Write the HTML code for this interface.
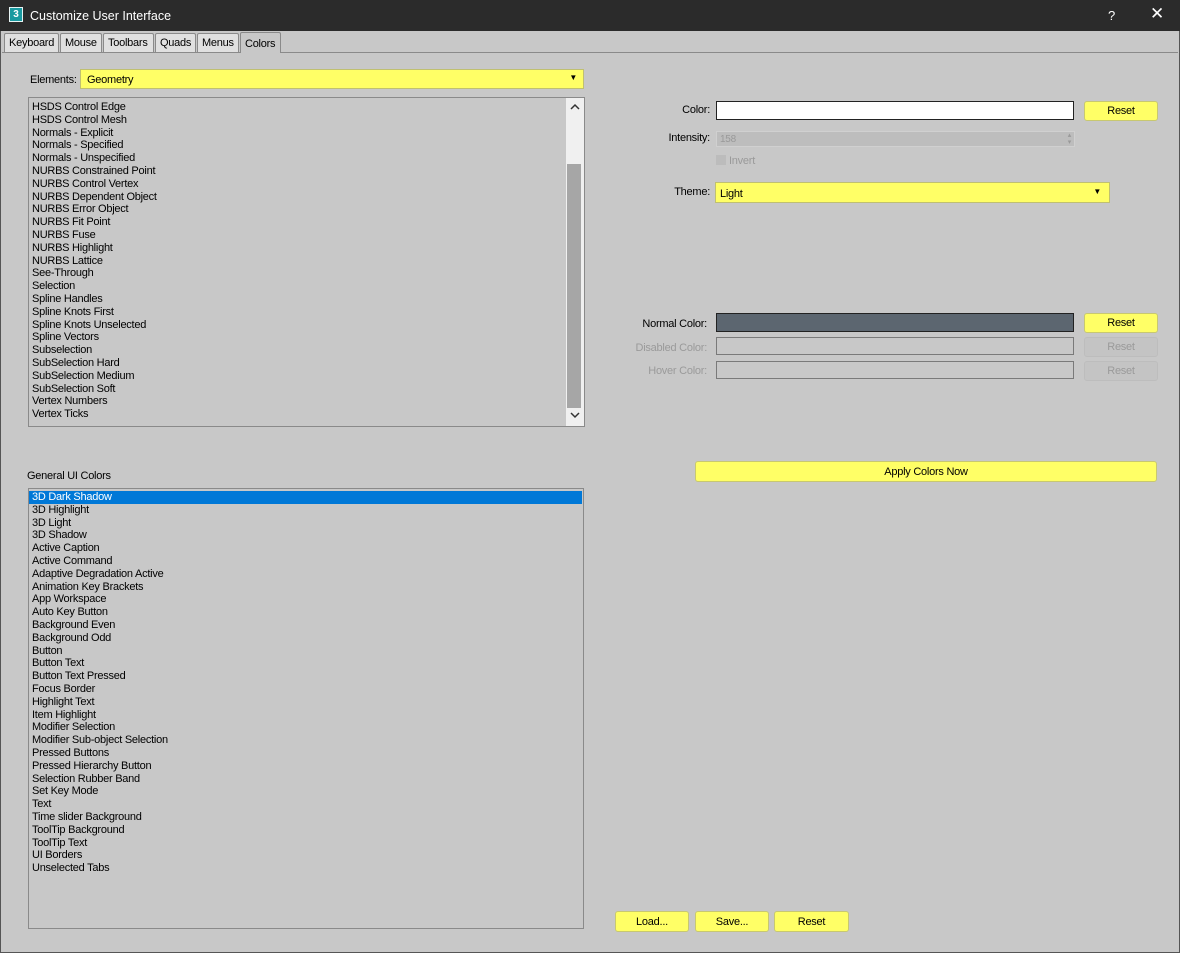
<!DOCTYPE html>
<html><head><style>
*{box-sizing:border-box;margin:0;padding:0}
body{width:1180px;height:953px;background:#c8c8c8;font-family:"Liberation Sans",sans-serif;font-size:11px;letter-spacing:-0.25px;color:#000;position:relative;overflow:hidden}
.a{position:absolute}
.title{left:0;top:0;width:1180px;height:31px;background:#2b2b2b;color:#fff;font-size:12.5px;letter-spacing:0}
.tab{top:33px;height:19px;border:1px solid #8a8a8a;border-bottom:none;background:#e0e0e0;padding:3px 4px 0;font-size:11px;border-radius:2px 2px 0 0}
.list div{height:12.8px;line-height:12.8px;padding-left:3px;white-space:nowrap}
.yb{background:#ffff66;border:1px solid #c8c870;border-radius:3px;text-align:center;line-height:20px}
.gb{background:#c4c4c4;border:1px solid #bdbdbd;border-radius:3px;text-align:center;line-height:20px;color:#9a9a9a}
.lbl{text-align:right;width:110px}
</style></head><body>
<div class="a title">
 <div class="a" style="left:9px;top:7px;width:14px;height:15px;background:#1a9aa0;border:1px solid #e8f4f4;color:#fff;font-size:10px;font-weight:bold;text-align:center;line-height:13px">3</div>
 <div class="a" style="left:30px;top:9px">Customize User Interface</div>
 <div class="a" style="left:1108px;top:8px;font-size:13px">?</div>
 <div class="a" style="left:1150px;top:4px;font-size:17px">✕</div>
</div>
<div class="a" style="left:0;top:31px;width:1180px;height:922px;border:1px solid #555;border-top:none"></div>
<div class="a" style="left:2px;top:52px;width:1176px;height:1px;background:#8a8a8a"></div>
<div class="a tab" style="left:4px;width:55px">Keyboard</div>
<div class="a tab" style="left:60px;width:42px">Mouse</div>
<div class="a tab" style="left:103px;width:51px">Toolbars</div>
<div class="a tab" style="left:155px;width:41px">Quads</div>
<div class="a tab" style="left:197px;width:42px">Menus</div>
<div class="a tab" style="left:240px;width:41px;top:32px;height:21px;background:#c8c8c8;padding-top:5px">Colors</div>

<div class="a" style="left:30px;top:74px">Elements:</div>
<div class="a" style="left:80px;top:69px;width:504px;height:20px;background:#ffff66;border:1px solid #c0c070;padding:4px 6px">Geometry<span class="a" style="right:6px;top:3px;font-size:8px">▼</span></div>

<div class="a list" style="left:28px;top:97px;width:557px;height:330px;background:#c8c8c8;border:1px solid #8a8a8a;padding-top:3px">
<div>HSDS Control Edge</div><div>HSDS Control Mesh</div><div>Normals - Explicit</div><div>Normals - Specified</div><div>Normals - Unspecified</div><div>NURBS Constrained Point</div><div>NURBS Control Vertex</div><div>NURBS Dependent Object</div><div>NURBS Error Object</div><div>NURBS Fit Point</div><div>NURBS Fuse</div><div>NURBS Highlight</div><div>NURBS Lattice</div><div>See-Through</div><div>Selection</div><div>Spline Handles</div><div>Spline Knots First</div><div>Spline Knots Unselected</div><div>Spline Vectors</div><div>Subselection</div><div>SubSelection Hard</div><div>SubSelection Medium</div><div>SubSelection Soft</div><div>Vertex Numbers</div><div>Vertex Ticks</div>
</div>
<div class="a" style="left:566px;top:98px;width:18px;height:328px;background:#f0f0f0"></div>
<div class="a" style="left:567px;top:164px;width:14px;height:244px;background:#a6a6a6"></div>
<svg class="a" style="left:570px;top:103px" width="10" height="8"><path d="M1 6 L5 2 L9 6" fill="none" stroke="#333" stroke-width="1.5"/></svg>
<svg class="a" style="left:570px;top:411px" width="10" height="8"><path d="M1 2 L5 6 L9 2" fill="none" stroke="#333" stroke-width="1.5"/></svg>

<div class="a" style="left:27px;top:470px">General UI Colors</div>
<div class="a list" style="left:28px;top:488px;width:556px;height:441px;border:1px solid #8a8a8a;padding-top:2px">
<div style="background:#0078d7;color:#fff;margin-right:1px">3D Dark Shadow</div><div>3D Highlight</div><div>3D Light</div><div>3D Shadow</div><div>Active Caption</div><div>Active Command</div><div>Adaptive Degradation Active</div><div>Animation Key Brackets</div><div>App Workspace</div><div>Auto Key Button</div><div>Background Even</div><div>Background Odd</div><div>Button</div><div>Button Text</div><div>Button Text Pressed</div><div>Focus Border</div><div>Highlight Text</div><div>Item Highlight</div><div>Modifier Selection</div><div>Modifier Sub-object Selection</div><div>Pressed Buttons</div><div>Pressed Hierarchy Button</div><div>Selection Rubber Band</div><div>Set Key Mode</div><div>Text</div><div>Time slider Background</div><div>ToolTip Background</div><div>ToolTip Text</div><div>UI Borders</div><div>Unselected Tabs</div>
</div>

<div class="a lbl" style="left:600px;top:104px">Color:</div>
<div class="a" style="left:716px;top:101px;width:358px;height:19px;background:#fff;border:1px solid #222"></div>
<div class="a yb" style="left:1084px;top:101px;width:74px;height:20px;line-height:19px">Reset</div>
<div class="a lbl" style="left:600px;top:132px">Intensity:</div>
<div class="a" style="left:716px;top:131px;width:359px;height:16px;background:#bdbdbd;border:1px solid #d0d0d0;color:#999;padding:2px 3px;font-size:10px">158<span class="a" style="right:3px;top:0;font-size:7px;line-height:7px">▴<br>▾</span></div>
<div class="a" style="left:716px;top:155px;width:10px;height:10px;background:#bcbcbc"></div>
<div class="a" style="left:729px;top:155px;color:#9a9a9a">Invert</div>
<div class="a lbl" style="left:600px;top:186px">Theme:</div>
<div class="a" style="left:715px;top:182px;width:395px;height:21px;background:#ffff66;border:1px solid #c0c070;padding:5px 4px">Light<span class="a" style="right:8px;top:4px;font-size:8px">▼</span></div>

<div class="a lbl" style="left:597px;top:318px">Normal Color:</div>
<div class="a" style="left:716px;top:313px;width:358px;height:19px;background:#5c6670;border:1px solid #222"></div>
<div class="a yb" style="left:1084px;top:313px;width:74px;height:20px;line-height:19px">Reset</div>
<div class="a lbl" style="left:597px;top:342px;color:#9a9a9a">Disabled Color:</div>
<div class="a" style="left:716px;top:337px;width:358px;height:18px;border:1px solid #7a7a7a"></div>
<div class="a gb" style="left:1084px;top:337px;width:74px;height:20px;line-height:19px">Reset</div>
<div class="a lbl" style="left:597px;top:365px;color:#9a9a9a">Hover Color:</div>
<div class="a" style="left:716px;top:361px;width:358px;height:18px;border:1px solid #7a7a7a"></div>
<div class="a gb" style="left:1084px;top:361px;width:74px;height:20px;line-height:19px">Reset</div>

<div class="a yb" style="left:695px;top:461px;width:462px;height:21px;line-height:20px">Apply Colors Now</div>

<div class="a yb" style="left:615px;top:911px;width:74px;height:21px">Load...</div>
<div class="a yb" style="left:695px;top:911px;width:74px;height:21px">Save...</div>
<div class="a yb" style="left:774px;top:911px;width:75px;height:21px">Reset</div>
</body></html>
